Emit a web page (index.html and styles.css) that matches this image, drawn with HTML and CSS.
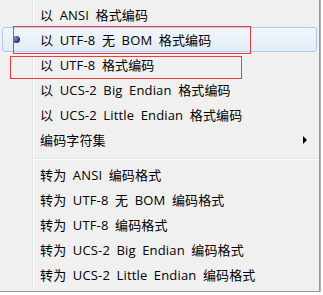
FILE: index.html
```html
<!DOCTYPE html>
<html lang="zh-CN">

<head>
    <meta charset="UTF-8">
    <meta name="viewport" content="width=device-width, initial-scale=1.0">
    <title>编码菜单</title>
    <link rel="stylesheet" href="styles.css">
</head>

<body>
    <div class="menu">
        <div class="item">以 ANSI 格式编码</div>
        <div class="item item-hover"><span class="check"><span class="bullet"></span></span>以 UTF-8 无 BOM 格式编码</div>
        <div class="item">以 UTF-8 格式编码</div>
        <div class="item">以 UCS-2 Big Endian 格式编码</div>
        <div class="item">以 UCS-2 Little Endian 格式编码</div>
        <div class="item">编码字符集<span class="arrow"></span></div>

        <div class="sep"></div>

        <div class="item">转为 ANSI 编码格式</div>
        <div class="item">转为 UTF-8 无 BOM 编码格式</div>
        <div class="item">转为 UTF-8 编码格式</div>
        <div class="item">转为 UCS-2 Big Endian 编码格式</div>
        <div class="item">转为 UCS-2 Little Endian 编码格式</div>

        <!-- red annotation boxes -->
        <div class="mark mark-1"></div>
        <div class="mark mark-2"></div>
    </div>
</body>

</html>
```

FILE: styles.css
```css
body {
    margin: 0;
    background-color: #ffffff;
    font-family: "Open Sans", "Noto Sans CJK SC", sans-serif;
    font-size: 13px;
    color: #000;
    overflow: hidden;
}

.menu {
    position: relative;
    width: 320px;
    height: 292px;
    padding: 2px 0 4px;
    background-color: #f0f0f0;
    background-image: linear-gradient(to right, transparent 32px, #e2e3e3 32px, #e2e3e3 33px, #ffffff 33px, #ffffff 34px, transparent 34px);
    border-right: 1px solid #979797;
    border-bottom: 1px solid #979797;
    box-shadow: 1px 0 0 #b5b5b5;
    box-sizing: border-box;
}

.item {
    height: 25px;
    display: flex;
    align-items: center;
    padding-left: 40px;
    white-space: nowrap;
    word-spacing: 3px;
    letter-spacing: 0.15px;
}

.item-hover {
    margin: 0 2px 0 2px;
    padding-left: 0;
    box-sizing: border-box;
    border: 1px solid #aeccf1;
    border-radius: 3px;
    background: linear-gradient(to bottom, #f2f6fb, #e3ecf8);
}

.check {
    width: 27px;
    margin-right: 10px;
    display: flex;
    justify-content: center;
}

.bullet {
    width: 7px;
    height: 7px;
    border-radius: 50%;
    background: radial-gradient(circle at 35% 35%, #8a8ad0, #2c2c7a 70%);
}

.arrow {
    margin-left: auto;
    margin-right: 12px;
    border-left: 4px solid #000;
    border-top: 4px solid transparent;
    border-bottom: 4px solid transparent;
}

.sep {
    height: 10px;
    margin-left: 34px;
    background: linear-gradient(to bottom, transparent 6px, #e2e3e3 6px, #e2e3e3 7px, #ffffff 7px, #ffffff 8px, transparent 8px);
}

.mark {
    position: absolute;
    border: 1px solid #ef3b3b;
}

.mark-1 {
    left: 13px;
    top: 26px;
    width: 236px;
    height: 26px;
}

.mark-2 {
    left: 10px;
    top: 56px;
    width: 230px;
    height: 21px;
}
```
